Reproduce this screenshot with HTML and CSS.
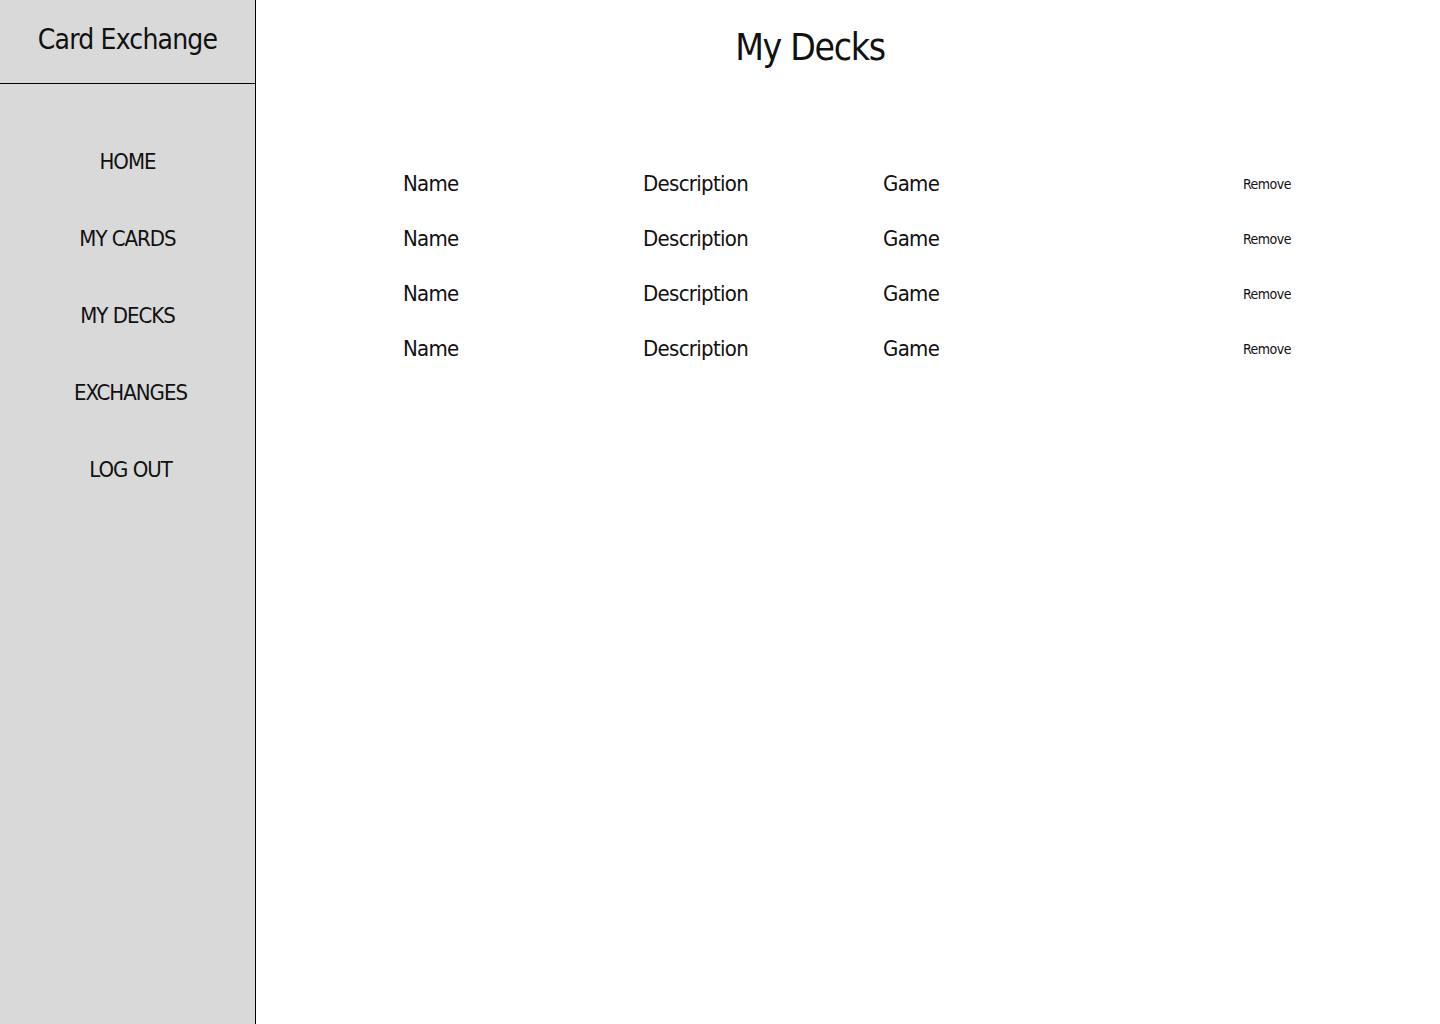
FILE: index.html
```html
<!DOCTYPE html>
<html lang="en">
<head>
<meta charset="utf-8">
<title>My Decks - Card Exchange</title>
<link rel="stylesheet" href="styles.css">
</head>
<body>
<div class="app">
  <aside class="sidebar">
    <div class="brand">Card Exchange</div>
    <nav class="nav">
      <a class="nav-item" href="#">HOME</a>
      <a class="nav-item" href="#">MY CARDS</a>
      <a class="nav-item" href="#">MY DECKS</a>
      <a class="nav-item shift" href="#">EXCHANGES</a>
      <a class="nav-item shift" href="#">LOG OUT</a>
    </nav>
  </aside>
  <main class="main">
    <h1 class="title">My Decks</h1>
    <div class="decks">
      <div class="deck-row">
        <span class="cell">Name</span>
        <span class="cell">Description</span>
        <span class="cell">Game</span>
        <a class="remove" href="#">Remove</a>
      </div>
      <div class="deck-row">
        <span class="cell">Name</span>
        <span class="cell">Description</span>
        <span class="cell">Game</span>
        <a class="remove" href="#">Remove</a>
      </div>
      <div class="deck-row">
        <span class="cell">Name</span>
        <span class="cell">Description</span>
        <span class="cell">Game</span>
        <a class="remove" href="#">Remove</a>
      </div>
      <div class="deck-row">
        <span class="cell">Name</span>
        <span class="cell">Description</span>
        <span class="cell">Game</span>
        <a class="remove" href="#">Remove</a>
      </div>
    </div>
  </main>
</div>
</body>
</html>
```
FILE: styles.css
```css
* { box-sizing: border-box; }
html, body { margin: 0; padding: 0; }
body {
  font-family: "DejaVu Sans Condensed", "DejaVu Sans", sans-serif;
  font-stretch: condensed;
  font-weight: 300;
  color: #111;
  background: #fff;
}
a { color: inherit; text-decoration: none; }
.app {
  display: flex;
  width: 1440px;
  height: 1024px;
}
.sidebar {
  width: 256px;
  flex: none;
  background: #d9d9d9;
  border-right: 1px solid #000;
  display: flex;
  flex-direction: column;
}
.brand {
  height: 84px;
  border-bottom: 1px solid #000;
  display: flex;
  justify-content: center;
  padding-top: 21px;
  font-size: 28px;
  line-height: 38px;
  letter-spacing: -0.8px;
}
.nav {
  display: flex;
  flex-direction: column;
  align-items: center;
  padding-top: 62px;
  gap: 45px;
}
.nav-item {
  font-size: 22px;
  line-height: 32px;
  letter-spacing: -1px;
}
.nav-item.shift { transform: translateX(3px); }
.main {
  flex: 1;
  display: flex;
  flex-direction: column;
  padding: 0 0 0 147px;
}
.title {
  margin: 0;
  font-weight: 300;
  font-size: 37px;
  line-height: 52px;
  letter-spacing: -1.3px;
  padding-top: 22px;
  width: 888px;
  text-align: center;
  padding-right: 74px;
}
.decks {
  margin-top: 94px;
  width: 888px;
  display: flex;
  flex-direction: column;
  gap: 23px;
}
.deck-row {
  display: grid;
  grid-template-columns: 240px 240px 1fr auto;
  align-items: center;
  height: 32px;
}
.cell {
  font-size: 22px;
  line-height: 32px;
  letter-spacing: -0.7px;
}
.remove {
  font-size: 14px;
  line-height: 20px;
  letter-spacing: -0.5px;
}
```
